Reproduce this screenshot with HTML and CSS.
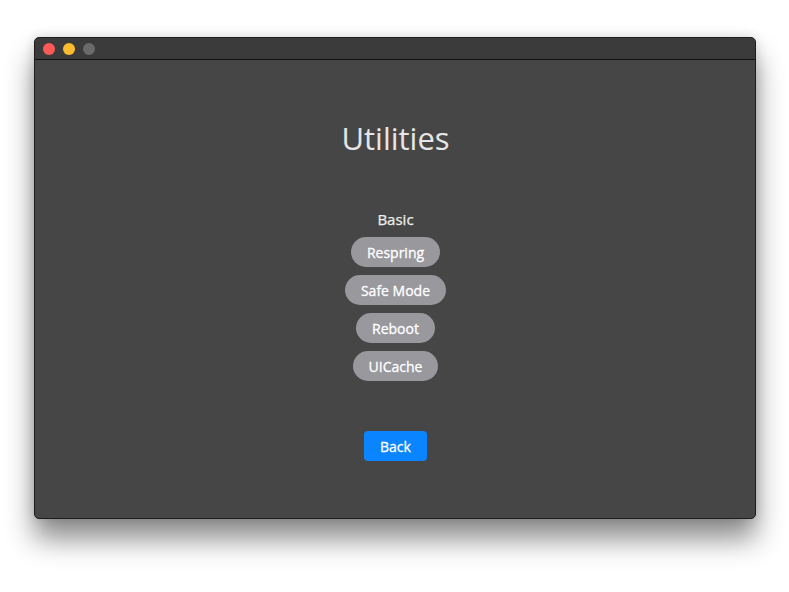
FILE: index.html
```html
<!DOCTYPE html>
<html>
<head>
<meta charset="utf-8">
<link rel="stylesheet" href="styles.css">
</head>
<body>
<div class="window">
  <div class="titlebar">
    <span class="light red"></span>
    <span class="light yellow"></span>
    <span class="light gray"></span>
  </div>
  <div class="content">
    <h1 class="title">Utilities</h1>
    <div class="section">Basic</div>
    <div class="buttons">
      <button class="pill">Respring</button>
      <button class="pill">Safe Mode</button>
      <button class="pill">Reboot</button>
      <button class="pill">UICache</button>
    </div>
    <button class="back">Back</button>
  </div>
</div>
</body>
</html>
```
FILE: styles.css
```css
html, body {
  margin: 0;
  padding: 0;
  background: #ffffff;
}
body {
  width: 789px;
  height: 592px;
  overflow: hidden;
  font-family: "Open Sans", "Noto Sans", sans-serif;
}
.window {
  margin: 37px 0 0 34px;
  width: 722px;
  height: 482px;
  box-sizing: border-box;
  background: #464646;
  border: 1px solid #1e1e1e;
  border-radius: 5px;
  box-shadow: 0 20px 28px rgba(0, 0, 0, 0.45), 0 0 12px rgba(0, 0, 0, 0.15);
  display: flex;
  flex-direction: column;
  overflow: hidden;
}
.titlebar {
  height: 21px;
  flex: none;
  background: #3c3b3b;
  border-bottom: 1px solid #111111;
  display: flex;
  align-items: center;
  gap: 8px;
  padding-left: 8px;
}
.light {
  width: 12px;
  height: 12px;
  border-radius: 50%;
}
.red { background: #fc5a57; }
.yellow { background: #fdbb2e; }
.gray { background: #6a6a6a; }
.content {
  display: flex;
  flex-direction: column;
  align-items: center;
  padding-top: 58px;
  padding-left: 1px;
}
.title {
  margin: 0;
  font-size: 31px;
  line-height: 40px;
  font-weight: 400;
  color: #e6e6e6;
}
.section {
  margin-top: 51px;
  font-size: 15px;
  line-height: 20px;
  font-weight: 400;
  color: #eeeeee;
  -webkit-text-stroke: 0.25px #eeeeee;
}
.buttons {
  margin-top: 8px;
  display: flex;
  flex-direction: column;
  align-items: center;
  gap: 8px;
}
.pill {
  height: 30px;
  padding: 0 16px;
  border: none;
  border-radius: 15px;
  background: #98989d;
  color: #ffffff;
  font-family: inherit;
  font-size: 14px;
  font-weight: 400;
  -webkit-text-stroke: 0.3px #ffffff;
}
.back {
  margin-top: 50px;
  height: 30px;
  padding: 0 16px;
  border: none;
  border-radius: 4px;
  background: #0a84ff;
  color: #ffffff;
  font-family: inherit;
  font-size: 14px;
  font-weight: 400;
  -webkit-text-stroke: 0.3px #ffffff;
}
```
